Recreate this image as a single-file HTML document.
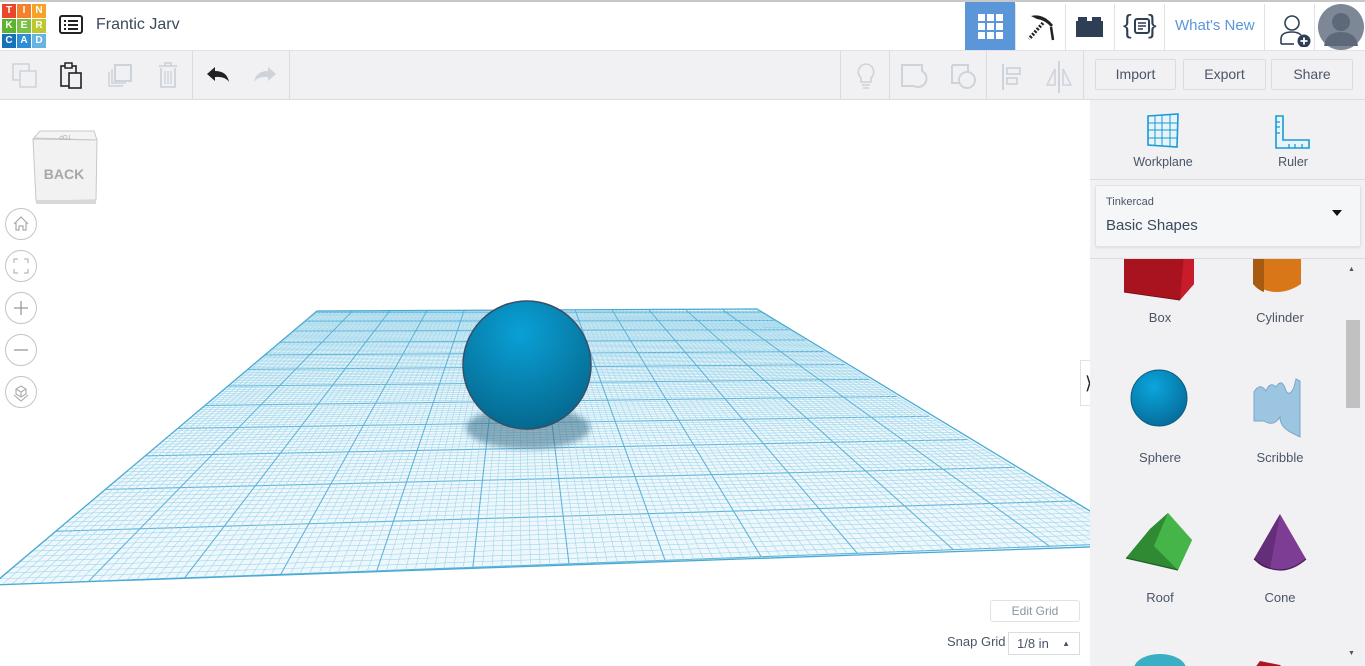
<!DOCTYPE html>
<html><head><meta charset="utf-8"><style>
*{box-sizing:border-box;margin:0;padding:0}
body{width:1365px;height:666px;overflow:hidden;background:#fff;font-family:"Liberation Sans",sans-serif;position:relative;color:#3c4a5c}
.abs{position:absolute}
#top{left:0;top:0;width:1365px;height:51px;background:#fff;border-top:2px solid #c8c8c8;border-bottom:1px solid #e2e2e6}
#tool{left:0;top:51px;width:1365px;height:49px;background:#f1f1f4;border-bottom:1px solid #dcdce0}
.sep{position:absolute;top:0;width:1px;height:49px;background:#dcdce0}
.tsep{position:absolute;top:2px;width:1px;height:49px;background:#e2e2e6}
.btn{position:absolute;top:8px;height:31px;border:1px solid #dcdce0;border-radius:2px;background:#f1f1f4;font-size:14px;color:#4a5568;text-align:center;line-height:29px}
#panel{left:1090px;top:100px;width:275px;height:566px;background:#f1f1f4}
.lbl{position:absolute;font-size:13px;color:#4a5568;text-align:center;width:120px}
.nav{position:absolute;left:5px;width:32px;height:32px;border:1px solid #c4c4c4;border-radius:50%;background:#fff}
</style></head><body>
<svg class="abs" style="left:0;top:100px" width="1090" height="566" viewBox="0 100 1090 566" id="grid"></svg>

<div id="top" class="abs">
 <div class="abs" style="left:2px;top:2px;width:44px;height:46px;font:bold 10px 'Liberation Sans';color:#fff;line-height:14px">
  <div style="display:grid;grid-template-columns:14px 14px 14px;grid-gap:1px;">
   <div style="background:#e8472b;height:14px;text-align:center">T</div><div style="background:#f57f2a;text-align:center">I</div><div style="background:#f5a32a;text-align:center">N</div>
   <div style="background:#5fb130;height:14px;text-align:center">K</div><div style="background:#7ac142;text-align:center">E</div><div style="background:#bdc830;text-align:center">R</div>
   <div style="background:#1771b8;height:14px;text-align:center">C</div><div style="background:#2e8fd6;text-align:center">A</div><div style="background:#67b4e3;text-align:center">D</div>
  </div></div>
 <svg class="abs" style="left:59px;top:13px" width="24" height="20"><rect x="1" y="1" width="22" height="17" rx="2" fill="none" stroke="#222" stroke-width="2"/><g fill="#222"><rect x="5" y="5" width="2" height="2"/><rect x="9" y="5" width="10" height="2"/><rect x="5" y="9" width="2" height="2"/><rect x="9" y="9" width="10" height="2"/><rect x="5" y="13" width="2" height="2"/><rect x="9" y="13" width="10" height="2"/></g></svg>
 <div class="abs" style="left:96px;top:14px;font-size:16px;color:#3c4a5c">Frantic Jarv</div>
 <div class="abs" style="left:965px;top:0;width:50px;height:48px;background:#5b96d9"></div>
 <svg class="abs" style="left:978px;top:12px" width="26" height="26"><g fill="#fff"><rect x="0" y="0" width="7" height="7"/><rect x="9" y="0" width="7" height="7"/><rect x="18" y="0" width="7" height="7"/><rect x="0" y="9" width="7" height="7"/><rect x="9" y="9" width="7" height="7"/><rect x="18" y="9" width="7" height="7"/><rect x="0" y="18" width="7" height="7"/><rect x="9" y="18" width="7" height="7"/><rect x="18" y="18" width="7" height="7"/></g></svg>
 <div class="tsep" style="left:1015px"></div><div class="tsep" style="left:1065px"></div><div class="tsep" style="left:1114px"></div><div class="tsep" style="left:1164px"></div><div class="tsep" style="left:1264px"></div><div class="tsep" style="left:1314px"></div>
 <svg class="abs" style="left:1025px;top:11px" width="32" height="30"><path d="M6 3 Q18 0 28 12 L26 14 Q20 7 12 6Z" fill="#222"/><path d="M18 10 L4 26" stroke="#222" stroke-width="3.5" stroke-dasharray="2 1.5"/><path d="M26 14 L28 27" stroke="#222" stroke-width="2.5"/></svg>
 <svg class="abs" style="left:1076px;top:14px" width="28" height="22"><rect x="0" y="5" width="27" height="16" fill="#2e3f55"/><rect x="2" y="1" width="9" height="6" fill="#2e3f55"/><rect x="16" y="1" width="9" height="6" fill="#2e3f55"/></svg>
 <div class="abs" style="left:1123px;top:7px;font-size:26px;color:#2e3f55">{</div><div class="abs" style="left:1148px;top:7px;font-size:26px;color:#2e3f55">}</div>
 <svg class="abs" style="left:1134px;top:16px" width="16" height="16"><rect x="1" y="1" width="14" height="14" rx="2" fill="none" stroke="#2e3f55" stroke-width="2"/><path d="M4 5h8M4 8h8M4 11h5" stroke="#2e3f55" stroke-width="1.5"/></svg>
 <div class="abs" style="left:1175px;top:15px;font-size:15px;color:#5b96d9">What's New</div>
 <svg class="abs" style="left:1278px;top:11px" width="36" height="34"><circle cx="14" cy="10" r="7" fill="none" stroke="#2e3f55" stroke-width="1.6"/><path d="M3 31 V26 Q3 19 14 19 Q20 19 23 22" fill="none" stroke="#2e3f55" stroke-width="1.6"/><path d="M3 31 H16" stroke="#2e3f55" stroke-width="1.6"/><circle cx="26" cy="28" r="6.5" fill="#2e3f55"/><path d="M22.5 28h7M26 24.5v7" stroke="#fff" stroke-width="1.8"/></svg>
 <svg class="abs" style="left:1318px;top:2px" width="46" height="46"><circle cx="23" cy="23" r="23" fill="#7d8796"/><circle cx="23" cy="18" r="9" fill="#5d6878"/><path d="M6 42 Q8 28 23 28 Q38 28 40 42 Z" fill="#5d6878"/></svg>
</div>

<div id="tool" class="abs">
 <svg class="abs" style="left:12px;top:12px" width="26" height="26"><rect x="1" y="1" width="16" height="16" fill="none" stroke="#cdd3da" stroke-width="1.5"/><rect x="8" y="8" width="16" height="16" fill="#f1f1f4" stroke="#cdd3da" stroke-width="1.5"/></svg>
 <svg class="abs" style="left:59px;top:11px" width="26" height="28"><rect x="2" y="4" width="15" height="20" fill="none" stroke="#222" stroke-width="1.6"/><rect x="6" y="1" width="7" height="5" fill="#f1f1f4" stroke="#222" stroke-width="1.5"/><rect x="10" y="11" width="12" height="15" fill="#f1f1f4" stroke="#222" stroke-width="1.6"/></svg>
 <svg class="abs" style="left:106px;top:12px" width="28" height="26"><rect x="9" y="2" width="16" height="16" fill="none" stroke="#cdd3da" stroke-width="2"/><path d="M6 6v14h14" fill="none" stroke="#cdd3da" stroke-width="1.5"/><path d="M3 9v14h14" fill="none" stroke="#cdd3da" stroke-width="1.5"/></svg>
 <svg class="abs" style="left:157px;top:10px" width="22" height="28"><path d="M2 5h18M8 5V2h6v3M4 7v19h14V7" fill="none" stroke="#cdd3da" stroke-width="1.8"/><path d="M8 10v13M11 10v13M14 10v13" stroke="#cdd3da" stroke-width="1.4"/></svg>
 <div class="sep" style="left:192px"></div>
 <svg class="abs" style="left:205px;top:15px" width="26" height="20"><path d="M2 8 L10 1 V5 Q22 5 24 16 Q20 10 10 11 V15 Z" fill="#222"/></svg>
 <svg class="abs" style="left:252px;top:15px" width="26" height="20"><path d="M24 8 L16 1 V5 Q4 5 2 16 Q6 10 16 11 V15 Z" fill="#cdd3da"/></svg>
 <div class="sep" style="left:289px"></div>
 <div class="sep" style="left:840px"></div>
 <svg class="abs" style="left:853px;top:11px" width="26" height="30"><path d="M13 2a8 8 0 0 0-5 14v4h10v-4a8 8 0 0 0-5-14z" fill="none" stroke="#cdd3da" stroke-width="1.6"/><path d="M9 23h8M10 26h6" stroke="#cdd3da" stroke-width="1.5"/></svg>
 <div class="sep" style="left:889px"></div>
 <svg class="abs" style="left:900px;top:12px" width="30" height="28"><path d="M2 2h20v6a8 8 0 1 1-8 15H2z" fill="none" stroke="#cdd3da" stroke-width="2"/></svg>
 <svg class="abs" style="left:950px;top:12px" width="30" height="28"><path d="M2 2h16v6M2 2v18h8" fill="none" stroke="#cdd3da" stroke-width="2"/><circle cx="17" cy="17" r="8" fill="none" stroke="#cdd3da" stroke-width="2"/></svg>
 <div class="sep" style="left:986px"></div>
 <svg class="abs" style="left:1000px;top:12px" width="26" height="28"><path d="M3 1v26" stroke="#cdd3da" stroke-width="2"/><rect x="7" y="5" width="13" height="6" fill="none" stroke="#cdd3da" stroke-width="1.8"/><rect x="7" y="15" width="10" height="6" fill="none" stroke="#cdd3da" stroke-width="1.8"/></svg>
 <svg class="abs" style="left:1043px;top:10px" width="32" height="32"><path d="M16 0v32" stroke="#cdd3da" stroke-width="2"/><path d="M12 8L4 24h8z" fill="none" stroke="#cdd3da" stroke-width="1.5"/><path d="M20 8l8 16h-8z" fill="none" stroke="#cdd3da" stroke-width="1.5"/></svg>
 <div class="sep" style="left:1083px"></div>
 <div class="btn" style="left:1095px;width:81px">Import</div>
 <div class="btn" style="left:1183px;width:83px">Export</div>
 <div class="btn" style="left:1271px;width:82px">Share</div>
</div>

<svg class="abs" style="left:28px;top:128px" width="72" height="80"><path d="M6 10 L12 3 L66 3 L69 12 Z" fill="#f4f4f4" stroke="#c8c8c8"/><path d="M5 11 L69 12 L68 72 L8 73 Z" fill="#f2f2f2" stroke="#c8c8c8"/><rect x="8" y="72" width="60" height="4" fill="#d8d8d8"/><text x="36" y="51" font-family="Liberation Sans" font-size="14" font-weight="bold" fill="#a8a8a8" text-anchor="middle">BACK</text><text x="37" y="11" font-size="6" fill="#aaa" text-anchor="middle" transform="rotate(180 37 9)">TOP</text></svg>
<div class="nav" style="top:208px"><svg width="30" height="30"><path d="M8 15 L15 8 L22 15 M10 13v8h3v-4h4v4h3v-8" fill="none" stroke="#aaa" stroke-width="1.2"/></svg></div>
<div class="nav" style="top:250px"><svg width="30" height="30"><path d="M8 12V8h4M18 8h4v4M22 18v4h-4M12 22H8v-4" fill="none" stroke="#bbb" stroke-width="1.3"/></svg></div>
<div class="nav" style="top:292px"><svg width="30" height="30"><path d="M15 8v14M8 15h14" stroke="#999" stroke-width="1.3"/></svg></div>
<div class="nav" style="top:334px"><svg width="30" height="30"><path d="M8 15h14" stroke="#999" stroke-width="1.3"/></svg></div>
<div class="nav" style="top:376px"><svg width="30" height="30"><path d="M15 9l5 3v5l-5 3-5-3v-5z M10 12l5 3 5-3M15 15v5M8 18l7 6 7-6" fill="none" stroke="#aaa" stroke-width="1.1"/></svg></div>

<div class="abs" style="left:990px;top:600px;width:90px;height:22px;border:1px solid #e2e2e6;border-radius:3px;background:#fff;font-size:12px;color:#8a95a3;text-align:center;line-height:20px">Edit Grid</div>
<div class="abs" style="left:947px;top:634px;font-size:13px;color:#4a5568">Snap Grid</div>
<div class="abs" style="left:1008px;top:632px;width:72px;height:23px;border:1px solid #dcdce0;background:#fff;font-size:13px;color:#4a5568;line-height:21px;padding-left:8px">1/8 in<span style="position:absolute;right:9px;font-size:8px">▲</span></div>
<div class="abs" style="left:1080px;top:360px;width:17px;height:46px;background:#fff;border:1px solid #e2e2e6;font-size:18px;line-height:44px;text-align:center;color:#222">&#x27E9;</div>

<div id="panel" class="abs">
 <svg class="abs" style="left:55px;top:13px" width="35" height="36"><path d="M3 3 L33 1 L32 34 L3 32 Z" fill="#e8f4fa" stroke="#1a9ad6" stroke-width="1.6"/><path d="M10 3v30M17 2v31M25 2v32M3 10h30M3 17h29M3 25h29" stroke="#1a9ad6" stroke-width="1"/></svg>
 <div class="lbl" style="left:13px;top:55px;font-size:12.5px">Workplane</div>
 <svg class="abs" style="left:185px;top:15px" width="36" height="36"><path d="M1 1h7v24h26v8H1z" fill="#e8f4fa" stroke="#1a9ad6" stroke-width="1.6"/><path d="M1 7h4M1 12h4M1 18h4M14 33v-4M20 33v-4M27 33v-4" stroke="#1a9ad6" stroke-width="1.3"/></svg>
 <div class="lbl" style="left:143px;top:55px;font-size:12.5px">Ruler</div>
 <div class="abs" style="left:0;top:79px;width:275px;height:1px;background:#dcdce0"></div>
 <div class="abs" style="left:5px;top:85px;width:266px;height:62px;background:#f5f6f8;border:1px solid #e2e2e6;border-radius:3px;box-shadow:0 1px 2px rgba(0,0,0,.08)">
  <div class="abs" style="left:10px;top:10px;font-size:11px;color:#4a5568">Tinkercad</div>
  <div class="abs" style="left:10px;top:31px;font-size:15px;color:#3c4a5c">Basic Shapes</div>
  <div class="abs" style="left:236px;top:24px;width:0;height:0;border-left:5px solid transparent;border-right:5px solid transparent;border-top:6px solid #111"></div>
 </div>
 <div class="abs" style="left:0;top:158px;width:275px;height:1px;background:#dcdce0"></div>
 <div class="abs" style="left:0;top:159px;width:275px;height:407px;overflow:hidden">
  <svg class="abs" style="left:30px;top:-5px" width="80" height="50"><path d="M4 5 L4 38 L60 46 L74 30 L74 0 Z" fill="#a8131f"/><path d="M60 46 L74 30 L74 0 L64 0 Z" fill="#c81c2a"/><path d="M4 38 L60 46" stroke="#7a0e17" stroke-width="1"/></svg>
  <svg class="abs" style="left:160px;top:-5px" width="60" height="45"><path d="M3 0 V30 Q27 46 51 30 V0 Z" fill="#d97718"/><path d="M3 0 V30 Q8 36 14 38 V0Z" fill="#a85a10"/></svg>
  <svg class="abs" style="left:40px;top:110px" width="62" height="62"><defs><radialGradient id="sg" cx="40%" cy="30%" r="70%"><stop offset="0" stop-color="#0aa6dd"/><stop offset="1" stop-color="#066f9d"/></radialGradient></defs><circle cx="29" cy="29" r="28" fill="url(#sg)" stroke="#0c5a80" stroke-width="1"/></svg>
  <svg class="abs" style="left:160px;top:118px" width="58" height="62"><path d="M4 15 Q10 5 16 14 Q20 4 26 10 Q32 0 36 14 Q40 20 44 10 L46 2 L50 4 L50 60 L42 56 Q30 50 30 40 Q24 50 14 44 L4 44 Z" fill="#9cc5e2" stroke="#7aa8c8"/></svg>
  <svg class="abs" style="left:34px;top:254px" width="72" height="60"><path d="M2 45 L26 16 L44 0 L68 27 L54 57 Z" fill="#3aa63f"/><path d="M2 45 L26 16 L44 0 L30 33 L54 57Z" fill="#2f8a33"/><path d="M44 0 L68 27 L54 57 L30 33 Z" fill="#45b54a"/><path d="M2 45 L54 57" stroke="#1e5e22" stroke-width="1.2"/></svg>
  <svg class="abs" style="left:162px;top:254px" width="56" height="66"><path d="M28 1 L2 46 Q28 68 54 46 Z" fill="#7e3d94"/><path d="M28 1 L2 46 Q8 54 18 56 Z" fill="#642e78"/><path d="M2 46 Q28 68 54 46" fill="none" stroke="#4a1f5a" stroke-width="1.2"/></svg>
  <svg class="abs" style="left:40px;top:395px" width="60" height="15"><ellipse cx="30" cy="15" rx="26" ry="15" fill="#3aaec5"/></svg>
  <svg class="abs" style="left:160px;top:400px" width="40" height="10"><path d="M4 10 L10 2 L30 6 L34 10Z" fill="#b0141f"/></svg>
 </div>
 <div class="lbl" style="left:10px;top:210px">Box</div>
 <div class="lbl" style="left:130px;top:210px">Cylinder</div>
 <div class="lbl" style="left:10px;top:350px">Sphere</div>
 <div class="lbl" style="left:130px;top:350px">Scribble</div>
 <div class="lbl" style="left:10px;top:490px">Roof</div>
 <div class="lbl" style="left:130px;top:490px">Cone</div>
 <div class="abs" style="left:258px;top:166px;font-size:7px;color:#555">▲</div>
 <div class="abs" style="left:256px;top:220px;width:14px;height:88px;background:#c1c1c1"></div>
 <div class="abs" style="left:258px;top:550px;font-size:7px;color:#555">▼</div>
</div>

<script>
(function(){
var s=document.getElementById('grid'),VX=519,VY=140,h='';
function Y(z){return VY+1/z;}
function tilt(x,y){return y-(x/1090)*40*Math.max(0,(y-310)/275);}
h+='<polygon points="317,311 757,309 1146,545 -8,585" fill="#eef8fc"/>';
var zN=1/445,zF=1/171,dz=0.000296/10;
var lines='';
var k=0;
for(var z=0.002545-0.000296; z<=zF+1e-9; z+=dz,k++){
 if(z<zN)continue;
 var y=Y(z),xl=VX+(-8-VX)*(y-VY)/445,xr=VX+(1146-VX)*(y-VY)/445;
 var major=(k%10==0);
 lines+='<line x1="'+xl+'" y1="'+tilt(xl,y)+'" x2="'+xr+'" y2="'+tilt(xr,y)+'" stroke="'+(major?'#5fb4d8':'#9fd5ea')+'" stroke-width="'+(major?1.1:0.6)+'"/>';
}
for(var i=0;i<=120;i++){
 var xb=-8+i*(1154/120),major=(i%10==0);
 var xt=VX+(xb-VX)*(311-VY)/445;
 lines+='<line x1="'+xt+'" y1="'+tilt(xt,310)+'" x2="'+xb+'" y2="'+tilt(xb,585)+'" stroke="'+(major?'#5fb4d8':'#9fd5ea')+'" stroke-width="'+(major?1.1:0.6)+'"/>';
}
h+='<clipPath id="gc"><polygon points="317,311 757,309 1146,545 -8,585"/></clipPath><g clip-path="url(#gc)">'+lines+'</g>';
h+='<polygon points="317,311 757,309 1146,545 -8,585" fill="none" stroke="#4aa9d4" stroke-width="1.3"/>';
h+='<defs><radialGradient id="bg2" cx="45%" cy="25%" r="75%"><stop offset="0" stop-color="#0aa0d6"/><stop offset="1" stop-color="#05698f"/></radialGradient><filter id="bl"><feGaussianBlur stdDeviation="3"/></filter></defs>';
h+='<ellipse cx="528" cy="428" rx="62" ry="21" fill="#3b6f8a" opacity="0.55" filter="url(#bl)"/>';
h+='<circle cx="527" cy="365" r="64" fill="url(#bg2)" stroke="#3a4e66" stroke-width="1.5"/>';
s.innerHTML=h;
})();
</script>
</body></html>
